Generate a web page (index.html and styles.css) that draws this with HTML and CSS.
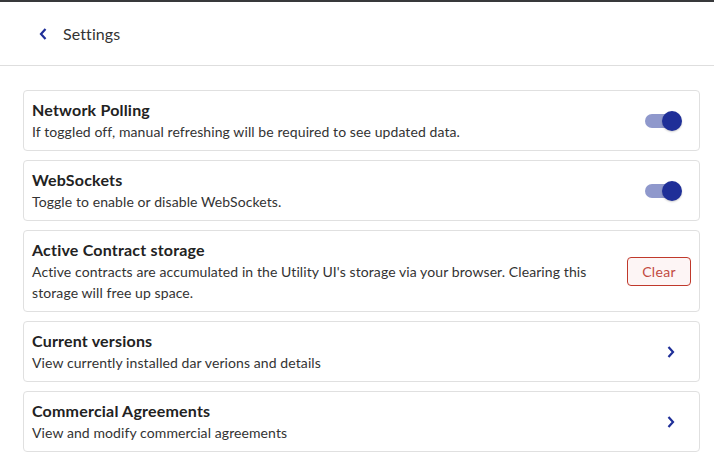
FILE: index.html
```html
<!DOCTYPE html>
<html>
<head>
<meta charset="utf-8">
<link rel="stylesheet" href="styles.css">
</head>
<body>
<div class="page">
  <header class="header">
    <span class="back">
      <svg width="8" height="12" viewBox="0 0 8 12"><path d="M6.5 1 L2 6 L6.5 11" fill="none" stroke="#1f2f98" stroke-width="2.2"/></svg>
    </span>
    <span class="header-title">Settings</span>
  </header>
  <main class="list">
    <div class="card">
      <div class="text">
        <div class="title">Network Polling</div>
        <div class="desc">If toggled off, manual refreshing will be required to see updated data.</div>
      </div>
      <span class="switch"><span class="track"></span><span class="thumb"></span></span>
    </div>
    <div class="card">
      <div class="text">
        <div class="title">WebSockets</div>
        <div class="desc">Toggle to enable or disable WebSockets.</div>
      </div>
      <span class="switch"><span class="track"></span><span class="thumb"></span></span>
    </div>
    <div class="card">
      <div class="text">
        <div class="title">Active Contract storage</div>
        <div class="desc">Active contracts are accumulated in the Utility UI's storage via your browser. Clearing this storage will free up space.</div>
      </div>
      <button class="clear">Clear</button>
    </div>
    <div class="card">
      <div class="text">
        <div class="title">Current versions</div>
        <div class="desc">View currently installed dar verions and details</div>
      </div>
      <span class="chev"><svg width="8" height="12" viewBox="0 0 8 12"><path d="M1.5 1 L6 6 L1.5 11" fill="none" stroke="#1f2f98" stroke-width="2.2"/></svg></span>
    </div>
    <div class="card">
      <div class="text">
        <div class="title">Commercial Agreements</div>
        <div class="desc">View and modify commercial agreements</div>
      </div>
      <span class="chev"><svg width="8" height="12" viewBox="0 0 8 12"><path d="M1.5 1 L6 6 L1.5 11" fill="none" stroke="#1f2f98" stroke-width="2.2"/></svg></span>
    </div>
  </main>
</div>
</body>
</html>
```
FILE: styles.css
```css
* { box-sizing: border-box; }
html, body { margin: 0; padding: 0; background: #fff; }
body {
  font-family: Lato, "Noto Sans", sans-serif;
  color: #222;
  border-top: 2px solid #38393b;
}
.header {
  height: 64px;
  border-bottom: 1px solid #dedede;
  display: flex;
  align-items: center;
  padding-left: 39px;
}
.back { display: flex; width: 24px; }
.header-title { font-size: 16px; color: #333; letter-spacing: 0.1px; }
.list {
  display: flex;
  flex-direction: column;
  gap: 9px;
  padding: 24px 14px 0 23px;
}
.card {
  border: 1px solid #e0e0e0;
  border-radius: 4px;
  display: flex;
  align-items: center;
  padding: 8px;
}
.text { flex: 1; min-width: 0; padding-right: 20px; }
.title { font-size: 16px; font-weight: 700; line-height: 22px; color: #222; letter-spacing: 0.2px; }
.desc { font-size: 14px; line-height: 21px; color: #333; letter-spacing: 0.09px; }
.switch {
  position: relative;
  width: 37px;
  height: 20px;
  margin-right: 9px;
  flex: none;
}
.track {
  position: absolute;
  left: 0; top: 3px;
  width: 34px; height: 14px;
  border-radius: 7px;
  background: #8f98cc;
}
.thumb {
  position: absolute;
  right: 0; top: 0;
  width: 20px; height: 20px;
  border-radius: 50%;
  background: #1f2f98;
  box-shadow: 0 1px 2px rgba(0,0,0,0.2);
}
.clear {
  flex: none;
  width: 64px; height: 29px;
  border: 1px solid #c0392b;
  border-radius: 4px;
  background: #fdf5f5;
  color: #c24a3f;
  font-family: Lato, sans-serif;
  font-size: 14px;
  letter-spacing: 0.3px;
  padding: 0;
}
.chev { display: flex; margin-right: 16px; flex: none; }
```
